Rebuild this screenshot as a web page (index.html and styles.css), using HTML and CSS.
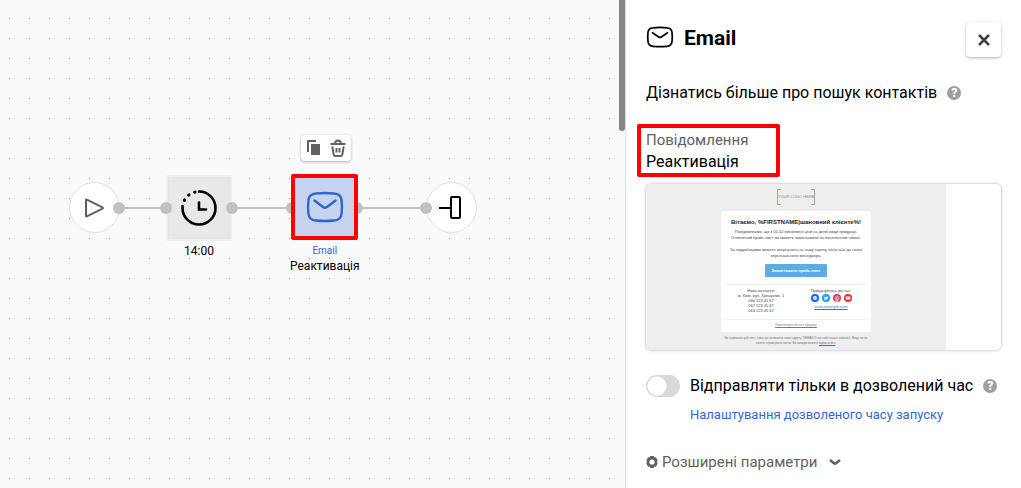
FILE: index.html
```html
<!DOCTYPE html>
<html lang="uk">

<head>
    <meta charset="UTF-8">
    <meta name="viewport" content="width=device-width, initial-scale=1.0">
    <title>Email</title>
    <link rel="stylesheet" href="styles.css">
</head>

<body>
    <div class="layout">
        <!-- Схема -->
        <main class="canvas">
            <div class="line line-1"></div>
            <div class="line line-2"></div>
            <div class="line line-3"></div>

            <div class="node node-start">
                <div class="circle">
                    <svg width="22" height="22" viewBox="0 0 22 22" fill="none" stroke="#616161" stroke-width="2" stroke-linejoin="round">
                        <path d="M2 3v16q0 .8.8.4L18.500 11.600q.9-.6 0-1.200L2.800 2.600Q2 2.200 2 3z" />
                    </svg>
                </div>
            </div>

            <div class="node node-timer">
                <div class="square">
                    <svg width="38" height="38" viewBox="0 0 38 38" fill="none" stroke="#000" stroke-width="2.6" stroke-linecap="round">
                        <path d="M19 2.5A16.500 16.500 0 1 1 2.500 19v-2" />
                        <path d="M4.300 11.400l.3-.5M8.600 6.200l.4-.3M14.600 3.200l.4-.1" stroke-width="3" />
                        <path d="M19 13.500v7h7" />
                    </svg>
                </div>
                <div class="node-name">14:00</div>
            </div>

            <span class="port port-1"></span>
            <span class="port port-2"></span>
            <span class="port port-3"></span>
            <span class="port port-4"></span>
            <span class="port port-5"></span>

            <div class="node node-email">
                <div class="square selected">
                    <svg width="38" height="32" viewBox="0 0 38 32" fill="none" stroke="#2e66d0" stroke-width="2.4" stroke-linecap="round" stroke-linejoin="round">
                        <path d="M10 2.500Q19 1.500 28 2.500Q35 3 35.500 9Q36.500 16 35.500 23Q35 29 28 29.500Q19 30.500 10 29.500Q3 29 2.500 23Q1.500 16 2.500 9Q3 3 10 2.500z" />
                        <path d="M8.500 9.500l8.500 6.500q2 1.500 4 0l8.500-6.500" />
                    </svg>
                </div>
                <div class="node-type">Email</div>
                <div class="node-name">Реактивація</div>
            </div>

            <div class="node node-end">
                <div class="circle">
                    <svg width="28" height="26" viewBox="0 0 28 26" fill="none" stroke="#000" stroke-width="2">
                        <rect x="13" y="2" width="9" height="21" rx="1" />
                        <path d="M1 13h12" />
                    </svg>
                </div>
            </div>
            <span class="port port-6"></span>

            <div class="toolbar">
                <button type="button" aria-label="Копіювати">
                    <svg width="14" height="16" viewBox="0 0 14 16">
                        <path d="M1 12V1h8" fill="none" stroke="#616161" stroke-width="2" />
                        <rect x="4" y="4" width="9" height="11" fill="#616161" />
                    </svg>
                </button>
                <button type="button" aria-label="Видалити">
                    <svg width="16" height="18" viewBox="0 0 16 18" fill="none" stroke="#616161" stroke-width="2" stroke-linejoin="round">
                        <path d="M.5 5h15M5 5q0-3.500 3-3.500T11 5M2.300 7.300l1.300 8q.3 1.700 2 1.700h4.800q1.700 0 2-1.700l1.300-8" />
                        <path d="M6.500 9v4.500M9.500 9v4.500" />
                    </svg>
                </button>
            </div>

            <div class="scroll-thumb"></div>
        </main>

        <!-- Параметри блоку -->
        <aside class="panel">
            <header class="panel-header">
                <svg width="28" height="24" viewBox="0 0 28 24" fill="none" stroke="#000" stroke-width="1.7" stroke-linecap="round" stroke-linejoin="round">
                    <path d="M7 2.800Q14 1.800 21 2.800Q25.500 3 26 7.300Q26.600 12 26 16.700Q25.500 21 21 21.300Q14 22.100 7 21.300Q2.500 21 2 16.700Q1.400 12 2 7.300Q2.500 3 7 2.800z" />
                    <path d="M6.500 7.800l6.200 4.200q1.300.9 2.600 0l6.200-4.200" />
                </svg>
                <h1>Email</h1>
                <button class="close-btn" type="button" aria-label="Закрити">
                    <svg width="12" height="12" viewBox="0 0 12 12" stroke="#424242" stroke-width="2.6">
                        <path d="M1 1l10 10M11 1L1 11" />
                    </svg>
                </button>
            </header>

            <div class="info-row">
                <span>Дізнатись більше про пошук контактів</span>
                <button class="help" type="button" aria-label="Довідка">?</button>
            </div>

            <div class="field">
                <div class="field-label">Повідомлення</div>
                <div class="field-value">Реактивація</div>
            </div>

            <div class="preview">
                <div class="mail">
                    <div class="mail-logo">YOUR LOGO HERE</div>
                    <div class="mail-body">
                        <h2>Вітаємо, %FIRSTNAME|шановний клієнте%!</h2>
                        <p>Повідомляємо, що з 01.02 змінилися ціни на деякі види продукції.<br>Оновлений прайс-лист ви можете завантажити за посиланням нижче.</p>
                        <p>За подробицями можете звернутися на нашу гарячу лінію або до свого<br>персонального менеджера.</p>
                        <a class="mail-btn" href="#">Завантажити прайс-лист</a>
                        <div class="mail-contacts">
                            <div>Наші контакти:<br>м. Київ, вул. Хрещатик, 1<br>066 123 45 67<br>067 123 45 67<br>063 123 45 67</div>
                            <div>
                                Приєднуйтесь до нас:
                                <div class="socials">
                                    <svg viewBox="0 0 8 8"><circle cx="4" cy="4" r="4" fill="#0866ff" /><circle cx="4" cy="4" r="2.1" fill="#fff" /><path d="M3 4.700l1-1 .5.600 1-1" stroke="#0866ff" stroke-width=".7" fill="none" /></svg>
                                    <svg viewBox="0 0 8 8"><circle cx="4" cy="4" r="4" fill="#1da1f2" /><path d="M2 2.500q1 1 2 1 .2-1.300 1.300-1l.8.2-.4 1.300Q5 6 3.300 6L2 5.600l.7-.5Q2 4 2 2.500z" fill="#fff" /></svg>
                                    <svg viewBox="0 0 8 8"><circle cx="4" cy="4" r="4" fill="#e1306c" /><path d="M1.200 6.800A4 4 0 0 0 6 7.500L4 5z" fill="#f9a03f" /><rect x="2.200" y="2.200" width="3.600" height="3.600" rx="1" fill="none" stroke="#fff" stroke-width=".6" /><circle cx="4" cy="4" r=".8" fill="#fff" /></svg>
                                    <svg viewBox="0 0 8 8"><circle cx="4" cy="4" r="4" fill="#f0322d" /><rect x="1.800" y="2.500" width="4.400" height="3" rx=".8" fill="#fff" /><path d="M3.600 3.200v1.600L4.900 4z" fill="#f0322d" /></svg>
                                </div>
                                <a href="#">www.example.com</a>
                            </div>
                        </div>
                        <div class="mail-browser">Переглянути листа в браузері</div>
                    </div>
                    <div class="mail-footer">Ви отримали цей лист, тому що залишили свою адресу %EMAIL% на сайті нашої компанії. Якщо ви не<br>хочете отримувати листи, Ви завжди можете <a href="#">відписатись</a>.</div>
                </div>
            </div>

            <div class="switch-row">
                <input id="allowed-time" class="switch" type="checkbox">
                <label for="allowed-time">Відправляти тільки в дозволений час</label>
                <button class="help" type="button" aria-label="Довідка">?</button>
            </div>
            <a class="settings-link" href="#">Налаштування дозволеного часу запуску</a>

            <button class="advanced" type="button">
                <svg width="12" height="14" viewBox="0 0 12 14">
                    <path d="M4.300 1h3.400l.5 1.500 1.700-.2 1.700 2.900L11 7l.6 1.800-1.700 2.900-1.700-.2-.5 1.500H4.300l-.5-1.500-1.700.2L.4 8.800 1 7 .4 5.200l1.700-2.900 1.700.2z" fill="#616161" />
                    <circle cx="6" cy="7" r="2.6" fill="#fff" />
                </svg>
                <span>Розширені параметри</span>
                <svg class="chevron" width="12" height="8" viewBox="0 0 12 8" fill="none" stroke="#616161" stroke-width="2.6">
                    <path d="M1 2l4 3.300q1 .8 2 0L11 2" />
                </svg>
            </button>
        </aside>
    </div>
</body>

</html>
```
FILE: styles.css
```css
* {
    margin: 0;
    padding: 0;
    box-sizing: border-box;
}

body {
    font-family: Roboto, 'Open Sans', sans-serif;
    font-size: 16px;
    color: #000;
    background: white;
}

button {
    font: inherit;
    color: inherit;
    background: none;
    border: none;
    cursor: pointer;
}

svg {
    display: block;
    flex: none;
}

.layout {
    display: flex;
    min-height: 100vh;
}

/* Схема */
.canvas {
    flex: 1;
    position: relative;
    overflow: hidden;
    background-color: #fafafa;
    background-image: url("data:image/svg+xml,%3Csvg xmlns='http://www.w3.org/2000/svg' width='20' height='20'%3E%3Crect x='9' y='18' width='1' height='1' fill='%23909090'/%3E%3C/svg%3E");
}

.line {
    position: absolute;
    top: 207px;
    height: 2px;
    background: #c1c1c1;
}

.line-1 {
    left: 119px;
    width: 47px;
}

.line-2 {
    left: 232px;
    width: 60px;
}

.line-3 {
    left: 358px;
    width: 68px;
}

.node {
    position: absolute;
    display: flex;
    flex-direction: column;
    align-items: center;
    white-space: nowrap;
}

.node-start {
    left: 69px;
    top: 182px;
}

.node-timer {
    left: 166px;
    top: 175px;
}

.node-email {
    left: 290px;
    top: 174px;
}

.node-end {
    left: 426px;
    top: 182px;
}

.circle {
    width: 51px;
    height: 51px;
    display: flex;
    align-items: center;
    justify-content: center;
    background: white;
    border: 1px solid #e0e0e0;
    border-radius: 50%;
}

.square {
    width: 66px;
    height: 66px;
    display: flex;
    align-items: center;
    justify-content: center;
    background: #e8e8e8;
    border: 2px solid #eee;
    box-shadow: inset 0 0 0 1px #e3e3e3;
    border-radius: 2px;
}

.square.selected {
    width: 67px;
    background: #c5d3ef;
    border: 4px solid #f00;
    box-shadow: none;
}

.node-name {
    font-size: 12px;
    line-height: 16px;
    margin-top: 2px;
}

.node-type {
    font-size: 10px;
    line-height: 14px;
    margin-top: 4px;
    color: #3367d6;
}

.node-type + .node-name {
    margin-top: 0;
}

.port {
    position: absolute;
    top: 202px;
    width: 12px;
    height: 12px;
    border-radius: 50%;
    background: #c1c1c1;
}

.port-1 {
    left: 113px;
}

.port-2 {
    left: 160px;
}

.port-3 {
    left: 226px;
}

.port-4 {
    left: 286px;
}

.port-5 {
    left: 351px;
}

.port-6 {
    left: 420px;
}

.toolbar {
    position: absolute;
    left: 301px;
    top: 135px;
    width: 50px;
    height: 26px;
    display: flex;
    align-items: center;
    justify-content: center;
    gap: 9px;
    background: white;
    border-radius: 4px;
    box-shadow: 0 1px 3px rgba(0, 0, 0, 0.3);
}

.scroll-thumb {
    position: absolute;
    right: 0;
    top: -10px;
    width: 6px;
    height: 141px;
    border-radius: 3px;
    background: #858585;
}

/* Панель */
.panel {
    width: 396px;
    padding: 22px 20px 14px;
    border-left: 1px solid #ddd;
    background: white;
}

.panel-header {
    display: flex;
    align-items: flex-start;
}

.panel-header > svg {
    margin-top: 3px;
}

.panel-header h1 {
    flex: 1;
    margin: 4px 0 0 10px;
    font-size: 21px;
    line-height: 24px;
}

.close-btn {
    width: 35px;
    height: 35px;
    display: flex;
    align-items: center;
    justify-content: center;
    border-radius: 4px;
    box-shadow: 0 1px 3px rgba(0, 0, 0, 0.3);
}

.info-row {
    display: flex;
    align-items: center;
    gap: 10px;
    margin-top: 24px;
    line-height: 24px;
}

.help {
    flex: none;
    width: 14px;
    height: 14px;
    border-radius: 50%;
    background: #9e9e9e;
    color: white;
    font-size: 12px;
    font-weight: 900;
    line-height: 14px;
    text-align: center;
}

.field {
    width: 143px;
    margin: 19px 0 7px -9px;
    padding: 2px 5px 1px;
    border: 4px solid #f00;
    border-radius: 2px;
    line-height: 21px;
}

.field-label {
    font-size: 15px;
    color: #616161;
}

.preview {
    overflow: hidden;
    border-radius: 5px;
    box-shadow: 0 0 3px rgba(0, 0, 0, 0.35);
}

.mail {
    width: 300px;
    height: 166px;
    padding-top: 5px;
    background: #eee;
    font-family: 'Liberation Sans', sans-serif;
    font-size: 4px;
    line-height: 6px;
    color: #444;
    text-align: center;
    white-space: nowrap;
}

.mail-logo {
    width: 38px;
    margin: 0 auto 6px;
    line-height: 16px;
    color: #8a8a78;
    border: 1px solid #a8a898;
    border-width: 0 1px;
    background: linear-gradient(90deg, #a8a898 3px, transparent 3px 33px, #a8a898 33px) top / 100% 1px no-repeat,
        linear-gradient(90deg, #a8a898 3px, transparent 3px 33px, #a8a898 33px) bottom / 100% 1px no-repeat;
}

.mail-body {
    width: 150px;
    height: 121px;
    margin: 0 auto;
    padding: 8px 5px 0;
    background: white;
}

.mail-body h2 {
    margin-bottom: 4px;
    font-size: 6px;
    line-height: 6px;
    color: #222;
}

.mail-body p {
    margin-bottom: 6px;
}

.mail-body p + p {
    margin-bottom: 5px;
}

.mail-btn {
    display: block;
    width: 62px;
    margin: 0 auto 7px;
    border-radius: 1px;
    background: #5dade2;
    color: white;
    font-weight: bold;
    line-height: 13px;
    text-decoration: none;
}

.mail-contacts {
    display: grid;
    grid-template-columns: 1fr 1fr;
    padding: 3px 0 6px;
    border-top: 1px solid #eee;
    border-bottom: 1px solid #eee;
    line-height: 5px;
}

.mail-contacts a,
.mail-footer a {
    color: #1f7fd0;
}

.socials {
    display: flex;
    justify-content: center;
    gap: 3px;
    margin: 1px 0 2px;
}

.socials svg {
    width: 8px;
    height: 8px;
}

.mail-browser {
    margin-top: 2px;
    font-size: 3px;
    color: #777;
    text-decoration: underline;
}

.mail-footer {
    margin-top: 4px;
    font-size: 3px;
    line-height: 5px;
    color: #777;
}

.switch-row {
    display: flex;
    align-items: center;
    gap: 10px;
    margin-top: 24px;
    line-height: 24px;
}

.switch {
    appearance: none;
    flex: none;
    width: 34px;
    height: 22px;
    border-radius: 11px;
    background: radial-gradient(circle at 11px 11px, white 9px, transparent 10px) #d9d9d9;
    cursor: pointer;
}

.switch:checked {
    background: radial-gradient(circle at 23px 11px, white 9px, transparent 10px) #3367d6;
}

.settings-link {
    display: block;
    margin: 7px 0 25px 44px;
    font-size: 13px;
    line-height: 20px;
    color: #3367d6;
    text-decoration: none;
}

.advanced {
    display: flex;
    align-items: center;
    gap: 4px;
    font-size: 15px;
    line-height: 24px;
    color: #616161;
}

.chevron {
    margin-left: 8px;
}
```
